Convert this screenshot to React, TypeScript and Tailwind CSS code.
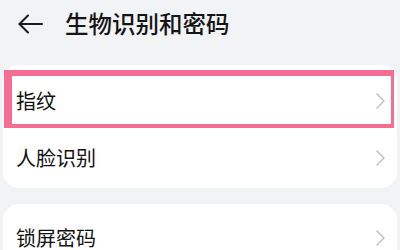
import React from 'react';

const font = { fontFamily: '"Noto Sans CJK SC", "Noto Sans", sans-serif' };

const Chevron: React.FC = () => (
  <svg width="9" height="16" viewBox="0 0 9 16" fill="none" className="shrink-0">
    <path d="M1 1 L8 8 L1 15" stroke="#bdbdbd" strokeWidth="1.4" strokeLinecap="round" strokeLinejoin="round" />
  </svg>
);

interface RowProps {
  label: string;
}

const Row: React.FC<RowProps> = ({ label }) => (
  <div className="flex h-[57px] items-center justify-between pl-[13px] pr-[12px]">
    <span className="text-[20px] leading-none text-[#111]">{label}</span>
    <Chevron />
  </div>
);

/**
 * Settings page: biometrics and password
 */
const App: React.FC = () => {
  return (
    <div className="h-[250px] w-[400px] overflow-hidden bg-[#f1f3f5]" style={font}>
      {/* Header */}
      <div className="flex h-[48px] items-center pl-[18px]">
        <svg width="25" height="20" viewBox="0 0 25 20" fill="none" className="shrink-0">
          <path d="M1.5 10 H24" stroke="#1a1a1a" strokeWidth="2" strokeLinecap="round" />
          <path d="M10 1.5 L1.5 10 L10 18.5" stroke="#1a1a1a" strokeWidth="2" strokeLinecap="round" strokeLinejoin="round" />
        </svg>
        <h1 className="ml-[22px] text-[23.5px] font-medium leading-none text-[#151515]">生物识别和密码</h1>
      </div>

      {/* Biometrics card */}
      <div className="relative mx-[3px] mt-[17px] rounded-2xl bg-white pb-[2px] pt-[7px]">
        <Row label="指纹" />
        <Row label="人脸识别" />
        <div className="pointer-events-none absolute left-[1px] top-[5px] h-[58px] w-[390px] border-b-[4px] border-l-[8px] border-r-[3px] border-t-[6px] border-[#f56d93]" />
      </div>

      {/* Lock screen card */}
      <div className="mx-[3px] mt-[16px] rounded-2xl bg-white pt-[5px]">
        <Row label="锁屏密码" />
      </div>
    </div>
  );
};

export default App;
